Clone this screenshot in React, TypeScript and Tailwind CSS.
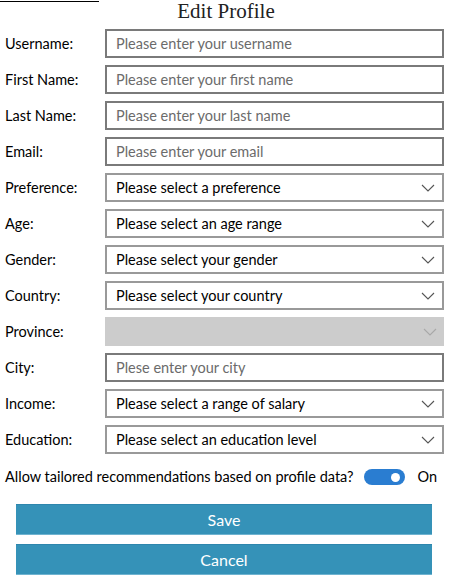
import React from "react"

type Field = {
  label: string
  kind: "text" | "select"
  text: string
  disabled?: boolean
}

const fields: Field[] = [
  { label: "Username:", kind: "text", text: "Please enter your username" },
  { label: "First Name:", kind: "text", text: "Please enter your first name" },
  { label: "Last Name:", kind: "text", text: "Please enter your last name" },
  { label: "Email:", kind: "text", text: "Please enter your email" },
  { label: "Preference:", kind: "select", text: "Please select a preference" },
  { label: "Age:", kind: "select", text: "Please select an age range" },
  { label: "Gender:", kind: "select", text: "Please select your gender" },
  { label: "Country:", kind: "select", text: "Please select your country" },
  { label: "Province:", kind: "select", text: "", disabled: true },
  { label: "City:", kind: "text", text: "Plese enter your city" },
  { label: "Income:", kind: "select", text: "Please select a range of salary" },
  { label: "Education:", kind: "select", text: "Please select an education level" },
]

function Chevron({ light }: { light?: boolean }) {
  return (
    <svg width="14" height="8" viewBox="0 0 14 8" className="mr-[7px]">
      <path d="M1 1 L7 7 L13 1" fill="none" stroke={light ? "#a8a8a8" : "#555"} strokeWidth="1.1" />
    </svg>
  )
}

export default function App() {
  return (
    <div className="w-[450px] h-[582px] bg-white text-black font-['Lato','Liberation_Sans',sans-serif] text-[14.5px] overflow-hidden">
      <div className="h-px w-[99px] bg-black mt-px" />
      <h1 className="text-center text-[21px] leading-[24px] -mt-[3px] font-['Liberation_Serif',serif] text-[#222] pl-[2px]">
        Edit Profile
      </h1>

      <div className="mt-[6px] flex flex-col gap-[7px]">
        {fields.map((f) => (
          <div key={f.label} className="flex items-center h-[29px]">
            <label className="w-[105px] pl-[5px] whitespace-nowrap">{f.label}</label>
            {f.disabled ? (
              <div className="w-[339px] h-[29px] bg-[#cccccc] flex items-center justify-end">
                <Chevron light />
              </div>
            ) : f.kind === "text" ? (
              <div className="w-[339px] h-[29px] border-2 border-[#7a7a7a] flex items-center pl-[9px] text-[#6b6b6b] whitespace-nowrap">
                {f.text}
              </div>
            ) : (
              <div className="w-[339px] h-[29px] border-2 border-[#999999] flex items-center justify-between pl-[9px] text-black whitespace-nowrap">
                <span>{f.text}</span>
                <Chevron />
              </div>
            )}
          </div>
        ))}
      </div>

      <div className="flex items-center h-[20px] mt-[13px] pl-[5px] whitespace-nowrap">
        <span>Allow tailored recommendations based on profile data?</span>
        <div className="ml-[11px] w-[41px] h-[16px] rounded-full bg-[#2a7dd1] flex items-center justify-end pr-[5px]">
          <div className="w-[9px] h-[9px] rounded-full bg-white" />
        </div>
        <span className="ml-[12px]">On</span>
      </div>

      <div className="mx-[16px] mt-[17px] flex flex-col gap-[9px]">
        <button className="h-[31px] w-[416px] bg-[#3592b8] border-t border-t-[#2e86ad] border-b border-b-[#6fb3d0] text-white text-[16px]">
          Save
        </button>
        <button className="h-[31px] w-[416px] bg-[#3592b8] border-t border-t-[#2e86ad] border-b border-b-[#6fb3d0] text-white text-[16px]">
          Cancel
        </button>
      </div>
    </div>
  )
}
